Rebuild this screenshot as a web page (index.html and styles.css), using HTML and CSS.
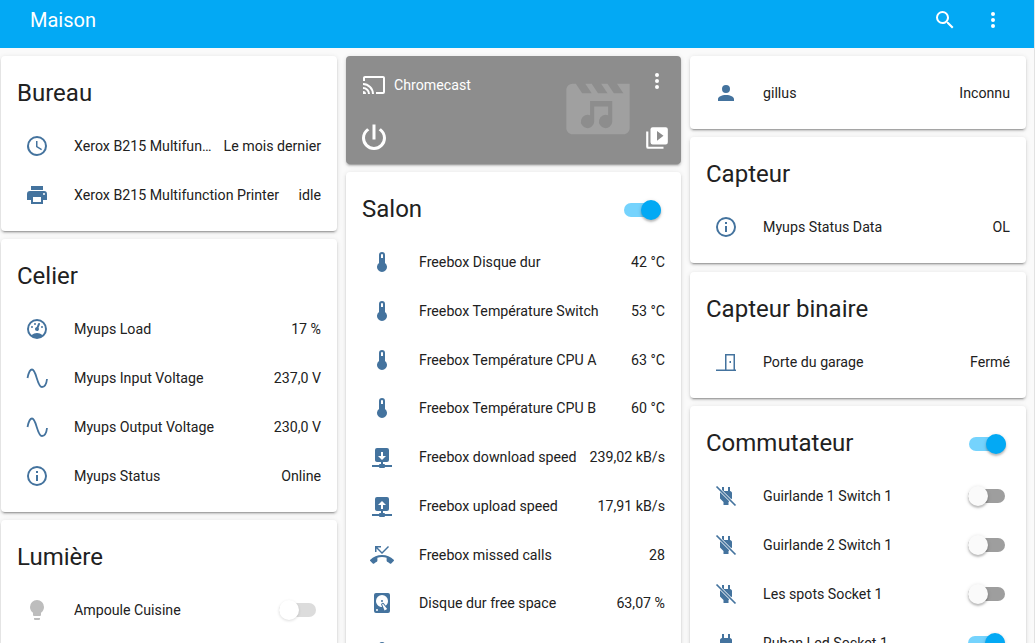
FILE: index.html
```html
<!DOCTYPE html>
<html lang="fr">
<head>
<meta charset="utf-8">
<title>Maison</title>
<link rel="stylesheet" href="styles.css">
</head>
<body>
<header class="topbar">
  <div class="topbar-title">Maison</div>
  <svg class="ic-white" viewBox="0 0 24 24"><path d="M9.5,3A6.5,6.5 0 0,1 16,9.5C16,11.11 15.41,12.59 14.44,13.73L14.71,14H15.5L20.5,19L19,20.5L14,15.5V14.71L13.73,14.44C12.59,15.41 11.11,16 9.5,16A6.5,6.5 0 0,1 3,9.5A6.5,6.5 0 0,1 9.5,3M9.5,5C7,5 5,7 5,9.5C5,12 7,14 9.5,14C12,14 14,12 14,9.5C14,7 12,5 9.5,5Z"/></svg>
  <svg class="ic-white" viewBox="0 0 24 24"><path d="M12,16A2,2 0 0,1 14,18A2,2 0 0,1 12,20A2,2 0 0,1 10,18A2,2 0 0,1 12,16M12,10A2,2 0 0,1 14,12A2,2 0 0,1 12,14A2,2 0 0,1 10,12A2,2 0 0,1 12,10M12,4A2,2 0 0,1 14,6A2,2 0 0,1 12,8A2,2 0 0,1 10,6A2,2 0 0,1 12,4Z"/></svg>
</header>
<main class="board">
  <section class="col">
    <article class="card">
      <h2 class="card-title">Bureau</h2>
      <div class="rows">
        <div class="row"><span class="ib"><svg class="ic" viewBox="0 0 24 24"><path d="M12,20A8,8 0 0,0 20,12A8,8 0 0,0 12,4A8,8 0 0,0 4,12A8,8 0 0,0 12,20M12,2A10,10 0 0,1 22,12A10,10 0 0,1 12,22C6.47,22 2,17.5 2,12A10,10 0 0,1 12,2M12.5,7V12.25L17,14.92L16.25,16.15L11,13V7H12.5Z"/></svg></span><span class="name">Xerox B215 Multifunction Printer</span><span class="val">Le mois dernier</span></div>
        <div class="row"><span class="ib"><svg class="ic" viewBox="0 0 24 24"><path d="M18,3H6V7H18M19,12A1,1 0 0,1 18,11A1,1 0 0,1 19,10A1,1 0 0,1 20,11A1,1 0 0,1 19,12M16,19H8V14H16M19,8H5A3,3 0 0,0 2,11V17H6V21H18V17H22V11A3,3 0 0,0 19,8Z"/></svg></span><span class="name">Xerox B215 Multifunction Printer</span><span class="val">idle</span></div>
      </div>
    </article>
    <article class="card">
      <h2 class="card-title">Celier</h2>
      <div class="rows">
        <div class="row"><span class="ib"><svg class="ic" viewBox="0 0 24 24"><path d="M12,2A10,10 0 0,0 2,12A10,10 0 0,0 12,22A10,10 0 0,0 22,12A10,10 0 0,0 12,2M12,4A8,8 0 0,1 20,12C20,14.4 19,16.5 17.3,18C15.9,16.7 14,16 12,16C10,16 8.2,16.7 6.7,18C5,16.5 4,14.4 4,12A8,8 0 0,1 12,4M14,5.89C13.62,5.9 13.26,6.15 13.1,6.54L11.81,9.77L11.71,10C11,10.13 10.41,10.6 10.14,11.26C9.73,12.29 10.23,13.45 11.26,13.86C12.29,14.27 13.45,13.77 13.86,12.74C14.12,12.08 14,11.32 13.57,10.76L13.67,10.5L14.96,7.29L14.97,7.26C15.17,6.75 14.92,6.17 14.41,5.96C14.28,5.91 14.15,5.89 14,5.89M10,6A1,1 0 0,0 9,7A1,1 0 0,0 10,8A1,1 0 0,0 11,7A1,1 0 0,0 10,6M7,9A1,1 0 0,0 6,10A1,1 0 0,0 7,11A1,1 0 0,0 8,10A1,1 0 0,0 7,9M17,9A1,1 0 0,0 16,10A1,1 0 0,0 17,11A1,1 0 0,0 18,10A1,1 0 0,0 17,9Z"/></svg></span><span class="name">Myups Load</span><span class="val">17 %</span></div>
        <div class="row"><span class="ib"><svg class="ic" viewBox="0 0 24 24"><path class="wave" d="M2.500 12C3.500 7 5 3.500 7 3.500C11.500 3.500 12 21 17 21C19.500 21 21.500 17.500 22 13"/></svg></span><span class="name">Myups Input Voltage</span><span class="val">237,0 V</span></div>
        <div class="row"><span class="ib"><svg class="ic" viewBox="0 0 24 24"><path class="wave" d="M2.500 12C3.500 7 5 3.500 7 3.500C11.500 3.500 12 21 17 21C19.500 21 21.500 17.500 22 13"/></svg></span><span class="name">Myups Output Voltage</span><span class="val">230,0 V</span></div>
        <div class="row"><span class="ib"><svg class="ic" viewBox="0 0 24 24"><path d="M11,9H13V7H11M12,20C7.59,20 4,16.41 4,12C4,7.59 7.59,4 12,4C16.41,4 20,7.59 20,12C20,16.41 16.41,20 12,20M12,2A10,10 0 0,0 2,12A10,10 0 0,0 12,22A10,10 0 0,0 22,12A10,10 0 0,0 12,2M11,17H13V11H11V17Z"/></svg></span><span class="name">Myups Status</span><span class="val">Online</span></div>
      </div>
    </article>
    <article class="card">
      <h2 class="card-title">Lumière</h2>
      <div class="rows">
        <div class="row"><span class="ib"><svg class="ic ic-off" viewBox="0 0 24 24"><path d="M12,2A7,7 0 0,0 5,9C5,11.38 6.19,13.47 8,14.74V17A1,1 0 0,0 9,18H15A1,1 0 0,0 16,17V14.74C17.81,13.47 19,11.38 19,9A7,7 0 0,0 12,2M9,21A1,1 0 0,0 10,22H14A1,1 0 0,0 15,21V20H9V21Z"/></svg></span><span class="name">Ampoule Cuisine</span><span class="toggle toggle-dis"><i></i></span></div>
      </div>
    </article>
  </section>

  <section class="col">
    <article class="card media">
      <svg class="media-art" viewBox="0 0 24 24"><path fill-rule="evenodd" d="M18 4L20 7H17L15 4H13L15 7H12L10 4H8L10 7H7L5 4H4C2.9 4 2 4.9 2 6V18C2 19.1 2.9 20 4 20H20C21.1 20 22 19.1 22 18V4H18M9.5 9.5H16.5V16A2.1 2.1 0 1 1 15.2 14V11.2H10.8V16A2.1 2.1 0 1 1 9.5 14Z"/></svg>
      <div class="media-top">
        <svg class="ic-white" viewBox="0 0 24 24"><path d="M1,10V12A9,9 0 0,1 10,21H12C12,14.92 7.07,10 1,10M1,14V16A5,5 0 0,1 6,21H8A7,7 0 0,0 1,14M1,18V21H4A3,3 0 0,0 1,18M21,3H3C1.89,3 1,3.89 1,5V8H3V5H21V19H14V21H21A2,2 0 0,0 23,19V5C23,3.89 22.1,3 21,3Z"/></svg>
        <span class="media-name">Chromecast</span>
        <svg class="ic-white media-more" viewBox="0 0 24 24"><path d="M12,16A2,2 0 0,1 14,18A2,2 0 0,1 12,20A2,2 0 0,1 10,18A2,2 0 0,1 12,16M12,10A2,2 0 0,1 14,12A2,2 0 0,1 12,14A2,2 0 0,1 10,12A2,2 0 0,1 12,10M12,4A2,2 0 0,1 14,6A2,2 0 0,1 12,8A2,2 0 0,1 10,6A2,2 0 0,1 12,4Z"/></svg>
      </div>
      <div class="media-bottom">
        <svg class="ic-white ic-power" viewBox="0 0 24 24"><path d="M16.56,5.44L15.11,6.89C16.84,7.94 18,9.83 18,12A6,6 0 0,1 12,18A6,6 0 0,1 6,12C6,9.83 7.16,7.94 8.88,6.88L7.44,5.44C5.36,6.88 4,9.28 4,12A8,8 0 0,0 12,20A8,8 0 0,0 20,12C20,9.28 18.64,6.88 16.56,5.44M13,3H11V13H13"/></svg>
        <svg class="ic-white ic-play" viewBox="0 0 24 24"><path d="M4,6H2V20A2,2 0 0,0 4,22H18V20H4V6M20,2H8A2,2 0 0,0 6,4V16A2,2 0 0,0 8,18H20A2,2 0 0,0 22,16V4A2,2 0 0,0 20,2M12,14.5V5.5L18,10L12,14.5Z"/></svg>
      </div>
    </article>
    <article class="card">
      <div class="title-row"><h2 class="card-title">Salon</h2><span class="toggle toggle-on"><i></i></span></div>
      <div class="rows rows-tight">
        <div class="row"><span class="ib"><svg class="ic" viewBox="0 0 24 24"><path d="M15 13V5A3 3 0 0 0 9 5V13A5 5 0 1 0 15 13M12 4A1 1 0 0 1 13 5V8H11V5A1 1 0 0 1 12 4Z"/></svg></span><span class="name">Freebox Disque dur</span><span class="val">42 °C</span></div>
        <div class="row"><span class="ib"><svg class="ic" viewBox="0 0 24 24"><path d="M15 13V5A3 3 0 0 0 9 5V13A5 5 0 1 0 15 13M12 4A1 1 0 0 1 13 5V8H11V5A1 1 0 0 1 12 4Z"/></svg></span><span class="name">Freebox Température Switch</span><span class="val">53 °C</span></div>
        <div class="row"><span class="ib"><svg class="ic" viewBox="0 0 24 24"><path d="M15 13V5A3 3 0 0 0 9 5V13A5 5 0 1 0 15 13M12 4A1 1 0 0 1 13 5V8H11V5A1 1 0 0 1 12 4Z"/></svg></span><span class="name">Freebox Température CPU A</span><span class="val">63 °C</span></div>
        <div class="row"><span class="ib"><svg class="ic" viewBox="0 0 24 24"><path d="M15 13V5A3 3 0 0 0 9 5V13A5 5 0 1 0 15 13M12 4A1 1 0 0 1 13 5V8H11V5A1 1 0 0 1 12 4Z"/></svg></span><span class="name">Freebox Température CPU B</span><span class="val">60 °C</span></div>
        <div class="row"><span class="ib"><svg class="ic" viewBox="0 0 24 24"><path d="M17,3A2,2 0 0,1 19,5V15A2,2 0 0,1 17,17H13V19H14A1,1 0 0,1 15,20H22V22H15A1,1 0 0,1 14,23H10A1,1 0 0,1 9,22H2V20H9A1,1 0 0,1 10,19H11V17H7C5.89,17 5,16.1 5,15V5A2,2 0 0,1 7,3H17M12,15L16,11H13V7H11V11H8L12,15Z"/></svg></span><span class="name">Freebox download speed</span><span class="val">239,02 kB/s</span></div>
        <div class="row"><span class="ib"><svg class="ic" viewBox="0 0 24 24"><path d="M17,3A2,2 0 0,1 19,5V15A2,2 0 0,1 17,17H13V19H14A1,1 0 0,1 15,20H22V22H15A1,1 0 0,1 14,23H10A1,1 0 0,1 9,22H2V20H9A1,1 0 0,1 10,19H11V17H7C5.89,17 5,16.1 5,15V5A2,2 0 0,1 7,3H17M12,7L8,11H11V15H13V11H16L12,7Z"/></svg></span><span class="name">Freebox upload speed</span><span class="val">17,91 kB/s</span></div>
        <div class="row"><span class="ib"><svg class="ic" viewBox="0 0 24 24"><path d="M23.71,16.67C20.66,13.77 16.54,12 12,12C7.46,12 3.34,13.77 0.29,16.67C0.11,16.85 0,17.1 0,17.38C0,17.66 0.11,17.91 0.29,18.09L2.77,20.57C2.95,20.75 3.2,20.86 3.5,20.86C3.75,20.86 4,20.75 4.18,20.58C4.97,19.84 5.87,19.22 6.84,18.73C7.17,18.57 7.4,18.23 7.4,17.83V14.73C8.85,14.25 10.39,14 12,14C13.6,14 15.15,14.25 16.6,14.72V17.82C16.6,18.21 16.83,18.56 17.16,18.72C18.14,19.21 19.03,19.84 19.83,20.57C20,20.75 20.25,20.85 20.5,20.85C20.8,20.85 21.05,20.74 21.23,20.56L23.71,18.08C23.89,17.9 24,17.65 24,17.37C24,17.09 23.89,16.85 23.71,16.67M6.5,5.5L12,11L19,4L18,3L12,9L7.5,4.5H11V3H5V9H6.5V5.5Z"/></svg></span><span class="name">Freebox missed calls</span><span class="val">28</span></div>
        <div class="row"><span class="ib"><svg class="ic" viewBox="0 0 24 24"><path d="M6,2H18A2,2 0 0,1 20,4V20A2,2 0 0,1 18,22H6A2,2 0 0,1 4,20V4A2,2 0 0,1 6,2M12,4A6,6 0 0,0 6,10C6,13.31 8.69,16 12.1,16L11.22,13.77C10.95,13.29 11.11,12.68 11.59,12.4L12.45,11.9C12.93,11.63 13.54,11.79 13.82,12.27L15.74,14.69C17.12,13.59 18,11.9 18,10A6,6 0 0,0 12,4M12,9A1,1 0 0,1 13,10A1,1 0 0,1 12,11A1,1 0 0,1 11,10A1,1 0 0,1 12,9M7,18A1,1 0 0,0 6,19A1,1 0 0,0 7,20A1,1 0 0,0 8,19A1,1 0 0,0 7,18M12.09,13.27L14.58,19.58L17.17,18.08L12.95,12.77L12.09,13.27Z"/></svg></span><span class="name">Disque dur free space</span><span class="val">63,07 %</span></div>
        <div class="row"><span class="ib"><svg class="ic" viewBox="0 0 24 24"><path d="M15 13V5A3 3 0 0 0 9 5V13A5 5 0 1 0 15 13M12 4A1 1 0 0 1 13 5V8H11V5A1 1 0 0 1 12 4Z"/></svg></span></div>
      </div>
    </article>
  </section>

  <section class="col">
    <article class="card card-entity">
      <div class="row"><span class="ib"><svg class="ic" viewBox="0 0 24 24"><path d="M12,4A4,4 0 0,1 16,8A4,4 0 0,1 12,12A4,4 0 0,1 8,8A4,4 0 0,1 12,4M12,14C16.42,14 20,15.79 20,18V20H4V18C4,15.79 7.58,14 12,14Z"/></svg></span><span class="name">gillus</span><span class="val">Inconnu</span></div>
    </article>
    <article class="card">
      <h2 class="card-title">Capteur</h2>
      <div class="rows">
        <div class="row"><span class="ib"><svg class="ic" viewBox="0 0 24 24"><path d="M11,9H13V7H11M12,20C7.59,20 4,16.41 4,12C4,7.59 7.59,4 12,4C16.41,4 20,7.59 20,12C20,16.41 16.41,20 12,20M12,2A10,10 0 0,0 2,12A10,10 0 0,0 12,22A10,10 0 0,0 22,12A10,10 0 0,0 12,2M11,17H13V11H11V17Z"/></svg></span><span class="name">Myups Status Data</span><span class="val">OL</span></div>
      </div>
    </article>
    <article class="card card-spaced">
      <h2 class="card-title">Capteur binaire</h2>
      <div class="rows">
        <div class="row"><span class="ib"><svg class="ic" viewBox="0 0 24 24"><path d="M2 19.500H11V4H21V19.500H22V21H2ZM12.500 19.500H19.500V5.500H12.500ZM15.500 11H17V13H15.500Z" fill-rule="evenodd"/></svg></span><span class="name">Porte du garage</span><span class="val">Fermé</span></div>
      </div>
    </article>
    <article class="card">
      <div class="title-row"><h2 class="card-title">Commutateur</h2><span class="toggle toggle-on"><i></i></span></div>
      <div class="rows">
        <div class="row"><span class="ib"><svg class="ic" viewBox="0 0 24 24"><path d="M16,7V3H14V7H10V3H8V7C7,7 6,8 6,9V14.5L9.500,18V21H14.500V18L18,14.500V9C18,8 17,7 16,7Z"/><path class="slash-gap" d="M3 3L21 21"/><path class="slash" d="M2.500 2.500L21.500 21.500"/></svg></span><span class="name">Guirlande 1 Switch 1</span><span class="toggle toggle-off"><i></i></span></div>
        <div class="row"><span class="ib"><svg class="ic" viewBox="0 0 24 24"><path d="M16,7V3H14V7H10V3H8V7C7,7 6,8 6,9V14.5L9.500,18V21H14.500V18L18,14.500V9C18,8 17,7 16,7Z"/><path class="slash-gap" d="M3 3L21 21"/><path class="slash" d="M2.500 2.500L21.500 21.500"/></svg></span><span class="name">Guirlande 2 Switch 1</span><span class="toggle toggle-off"><i></i></span></div>
        <div class="row"><span class="ib"><svg class="ic" viewBox="0 0 24 24"><path d="M16,7V3H14V7H10V3H8V7C7,7 6,8 6,9V14.5L9.500,18V21H14.500V18L18,14.500V9C18,8 17,7 16,7Z"/><path class="slash-gap" d="M3 3L21 21"/><path class="slash" d="M2.500 2.500L21.500 21.500"/></svg></span><span class="name">Les spots Socket 1</span><span class="toggle toggle-off"><i></i></span></div>
        <div class="row"><span class="ib"><svg class="ic" viewBox="0 0 24 24"><path d="M16,7V3H14V7H10V3H8V7C7,7 6,8 6,9V14.5L9.500,18V21H14.500V18L18,14.500V9C18,8 17,7 16,7Z"/></svg></span><span class="name">Ruban Led Socket 1</span><span class="toggle toggle-on"><i></i></span></div>
      </div>
    </article>
  </section>
</main>
</body>
</html>
```
FILE: styles.css
```css
html, body {
  margin: 0;
  height: 643px;
  overflow: hidden;
}
body {
  background: #fafafa;
  color: #212121;
  font-family: Roboto, "Liberation Sans", sans-serif;
  font-size: 14.2px;
  border-right: 1px solid #e2e2e2;
  box-sizing: border-box;
}
.topbar {
  height: 48px;
  background: #03a9f4;
  display: flex;
  align-items: center;
  gap: 24px;
  padding: 0 29px 8px 30px;
  box-sizing: border-box;
}
.topbar-title {
  flex: 1;
  color: #fff;
  font-size: 20px;
  line-height: 24px;
}
.ic-white {
  width: 24px;
  height: 24px;
  fill: #fff;
  flex: none;
  display: block;
}
.board {
  display: grid;
  grid-template-columns: 336px 335px 336px;
  column-gap: 9px;
  padding: 8px 0 0 1px;
  align-items: start;
}
.col {
  display: flex;
  flex-direction: column;
  gap: 8px;
}
.card {
  background: #fff;
  border-radius: 4px;
  box-shadow: 0 2px 2px rgba(0,0,0,.14), 0 1px 5px rgba(0,0,0,.12), 0 3px 1px -2px rgba(0,0,0,.2);
  padding-bottom: 16px;
}
.card-spaced { margin-top: 1px; }
.card-title {
  margin: 0;
  padding: 21px 16px 17px;
  font-size: 24px;
  font-weight: 400;
  line-height: 32px;
  color: #212121;
}
.title-row {
  display: flex;
  align-items: center;
  justify-content: space-between;
  padding-right: 20px;
}
.title-row .toggle {
  margin: 5px 0 0;
}
.rows {
  display: flex;
  flex-direction: column;
  gap: 9px;
}
.rows-tight { gap: 8.75px; }
.row {
  display: flex;
  align-items: center;
  height: 40px;
  padding: 0 16px;
}
.ib {
  width: 40px;
  flex: none;
  display: flex;
  justify-content: center;
  margin-right: 17px;
}
.ic {
  width: 24px;
  height: 24px;
  fill: #44739e;
  display: block;
}
.ic-off { fill: #bdbdbd; }
.wave {
  fill: none;
  stroke: #44739e;
  stroke-width: 1.8;
}
.slash-gap {
  fill: none;
  stroke: #fff;
  stroke-width: 3;
}
.slash {
  fill: none;
  stroke: #44739e;
  stroke-width: 1.7;
}
.name {
  flex: 1;
  min-width: 0;
  white-space: nowrap;
  overflow: hidden;
  text-overflow: ellipsis;
}
.val {
  flex: none;
  margin-left: 10px;
}
.toggle {
  position: relative;
  flex: none;
  display: block;
  width: 37px;
  height: 14px;
  border-radius: 7px;
  margin-right: 5px;
}
.toggle i {
  position: absolute;
  top: -3px;
  width: 20px;
  height: 20px;
  border-radius: 50%;
  box-shadow: 0 2px 2px rgba(0,0,0,.2), 0 1px 4px rgba(0,0,0,.14);
}
.toggle-on { background: #75d3fd; }
.toggle-on i { right: 0; background: #03a9f4; }
.toggle-off { background: #9e9e9e; }
.toggle-off i { left: 0; background: #fafafa; }
.toggle-dis { background: #dcdcdc; }
.toggle-dis i { left: 0; background: #fff; box-shadow: 0 1px 3px rgba(0,0,0,.14); }
.media {
  position: relative;
  height: 108px;
  box-sizing: border-box;
  padding: 0;
  background: #8d8d8d;
  display: flex;
  flex-direction: column;
  justify-content: space-between;
}
.media-art {
  position: absolute;
  left: 214px;
  top: 15px;
  width: 76px;
  height: 76px;
  fill: #a0a0a0;
}
.media-top {
  position: relative;
  display: flex;
  align-items: center;
  gap: 8px;
  padding: 17px 12px 0 16px;
}
.media-name {
  flex: 1;
  color: #fff;
}
.media-more { margin-top: -8px; }
.media-bottom {
  position: relative;
  display: flex;
  align-items: center;
  justify-content: space-between;
  padding: 0 11px 8px 10px;
}
.ic-power { width: 36px; height: 36px; }
.ic-play { width: 26px; height: 26px; }
.card-entity {
  padding: 17px 0 16px;
}
```
